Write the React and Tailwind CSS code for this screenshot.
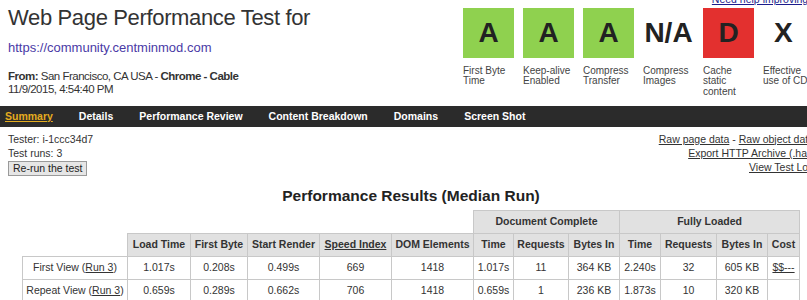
import React from "react";

const grades = [
  { grade: "A", label: ["First Byte", "Time"], bg: "bg-[#8fd14f]" },
  { grade: "A", label: ["Keep-alive", "Enabled"], bg: "bg-[#8fd14f]" },
  { grade: "A", label: ["Compress", "Transfer"], bg: "bg-[#8fd14f]" },
  { grade: "N/A", label: ["Compress", "Images"], bg: "" },
  { grade: "D", label: ["Cache", "static", "content"], bg: "bg-[#e3302f]" },
  { grade: "X", label: ["Effective", "use of CDN"], bg: "" },
];

const tabs = ["Summary", "Details", "Performance Review", "Content Breakdown", "Domains", "Screen Shot"];

const cell = "border border-[#c8c8c8] text-center align-middle";
const head = "border border-[#c8c8c8] bg-[#e1e1e1] text-center align-middle font-bold";

const rows = [
  { name: "First View", vals: ["1.017s", "0.208s", "0.499s", "669", "1418", "1.017s", "11", "364 KB", "2.240s", "32", "605 KB"], cost: true },
  { name: "Repeat View", vals: ["0.659s", "0.289s", "0.662s", "706", "1418", "0.659s", "1", "236 KB", "1.873s", "10", "320 KB"], cost: false },
];

export default function App() {
  return (
    <div className="w-[807px] h-[300px] overflow-hidden bg-white font-['Liberation_Sans',Arial,sans-serif] text-[#222]">
      <div className="w-[822px]">
        {/* header */}
        <div className="h-[106px] px-[8px] flex justify-between">
          <div>
            <h1 className="pt-[5px] text-[22px] leading-[26px] tracking-[-0.35px] text-[#333]">
              Web Page Performance Test for
            </h1>
            <a className="block mt-[9px] text-[13px] leading-[16px] text-[#4a3aa6]">
              https://community.centminmod.com
            </a>
            <div className="mt-[14px] text-[11.5px] leading-[13.3px] tracking-[-0.5px] text-[#333]">
              <div>
                <b>From:</b> San Francisco, CA USA - <b>Chrome - Cable</b>
              </div>
              <div>11/9/2015, 4:54:40 PM</div>
            </div>
          </div>
          <div className="flex flex-col items-end">
            <a className="block -mt-[7px] h-[12px] text-[10.5px] leading-[12px] underline text-[#1c1c8c]">
              Need help improving?
            </a>
            <div className="mt-[3px] grid grid-cols-[repeat(6,51px)] gap-x-[9px]">
              {grades.map((g, i) => (
                <div key={i} className="flex flex-col">
                  <div
                    className={`h-[50px] flex items-center font-bold text-[28px] text-[#222] ${g.bg} ${
                      g.grade === "X" ? "justify-start pl-[11px]" : "justify-center"
                    }`}
                  >
                    {g.grade}
                  </div>
                  <div className="mt-[7.5px] text-[10px] leading-[10.5px] text-[#444] whitespace-nowrap">
                    {g.label.map((l, j) => (
                      <div key={j}>{l}</div>
                    ))}
                  </div>
                </div>
              ))}
            </div>
          </div>
        </div>

        {/* nav */}
        <div className="h-[21px] bg-[#2b2b2b] flex items-center gap-[26px] pl-[5px] text-[10.5px] font-bold text-white">
          {tabs.map((t, i) => (
            <span key={t} className={i === 0 ? "text-[#e5ac1f] underline" : ""}>
              {t}
            </span>
          ))}
        </div>

        {/* test info */}
        <div className="px-[8px] pt-[4.6px] flex justify-between text-[10.5px] leading-[14.3px] text-[#333]">
          <div>
            <div>Tester: i-1ccc34d7</div>
            <div>Test runs: 3</div>
            <button className="mt-[1px] h-[15px] px-[4px] bg-[#e6e6e6] border border-[#9a9a9a] text-[10.5px] leading-[13px] text-[#222]">
              Re-run the test
            </button>
          </div>
          <div className="text-right">
            <div>
              <a className="underline">Raw page data</a> - <a className="underline">Raw object data</a>
            </div>
            <div>
              <a className="underline">Export HTTP Archive (.har)</a>
            </div>
            <div>
              <a className="underline">View Test Log</a>
            </div>
          </div>
        </div>

        {/* results */}
        <div className="px-[8px]">
          <h2 className="mt-[10.4px] text-center text-[15.5px] leading-[18px] font-bold text-[#222]">
            Performance Results (Median Run)
          </h2>
          <table className="mt-[5.4px] mx-auto w-[777px] table-fixed border-collapse text-[10.5px] text-[#333]">
            <colgroup>
              <col className="w-[105px]" />
              <col className="w-[63px]" />
              <col className="w-[57px]" />
              <col className="w-[72px]" />
              <col className="w-[72px]" />
              <col className="w-[82px]" />
              <col className="w-[40px]" />
              <col className="w-[55px]" />
              <col className="w-[51px]" />
              <col className="w-[41px]" />
              <col className="w-[56px]" />
              <col className="w-[51px]" />
              <col className="w-[32px]" />
            </colgroup>
            <thead>
              <tr className="h-[23px]">
                <th colSpan={6} className="border-0"></th>
                <th colSpan={3} className={head}>Document Complete</th>
                <th colSpan={4} className={head}>Fully Loaded</th>
              </tr>
              <tr className="h-[23px]">
                <th className="border-0"></th>
                <th className={head}>Load Time</th>
                <th className={head}>First Byte</th>
                <th className={head}>Start Render</th>
                <th className={head}>
                  <a className="underline">Speed Index</a>
                </th>
                <th className={head}>DOM Elements</th>
                <th className={head}>Time</th>
                <th className={head}>Requests</th>
                <th className={head}>Bytes In</th>
                <th className={head}>Time</th>
                <th className={head}>Requests</th>
                <th className={head}>Bytes In</th>
                <th className={head}>Cost</th>
              </tr>
            </thead>
            <tbody>
              {rows.map((r) => (
                <tr key={r.name} className="h-[23px]">
                  <td className={`${cell} whitespace-nowrap`}>
                    {r.name} (<a className="underline">Run 3</a>)
                  </td>
                  {r.vals.map((v, i) => (
                    <td key={i} className={cell}>
                      {v}
                    </td>
                  ))}
                  <td className={cell}>{r.cost ? <a className="underline">$$---</a> : null}</td>
                </tr>
              ))}
            </tbody>
          </table>
        </div>
      </div>
    </div>
  );
}
